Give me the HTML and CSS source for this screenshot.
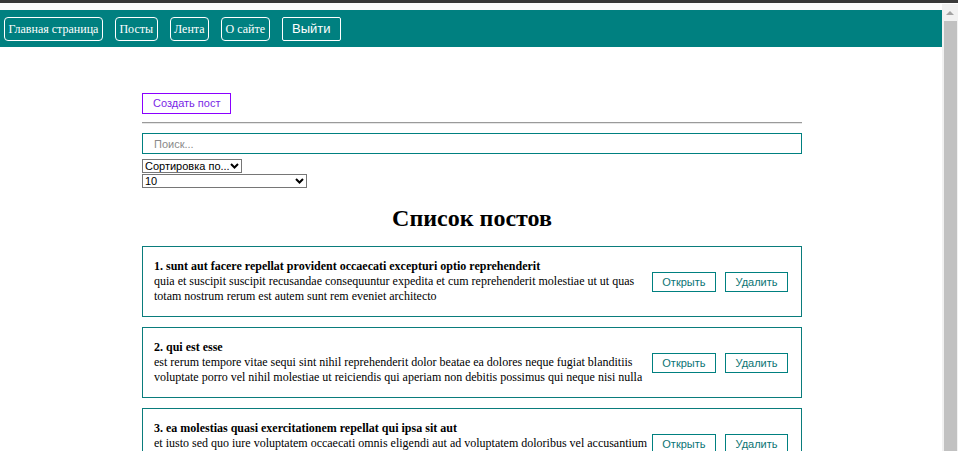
FILE: index.html
```html
<!DOCTYPE html>
<html lang="ru">
<head>
<meta charset="utf-8">
<title>Посты</title>
<link rel="stylesheet" href="styles.css">
</head>
<body>
<div class="chrome"></div>
<div class="window">
  <div class="page">
    <nav class="navbar">
      <a class="nav-link" href="#">Главная страница</a>
      <a class="nav-link" href="#">Посты</a>
      <a class="nav-link" href="#">Лента</a>
      <a class="nav-link" href="#">О сайте</a>
      <button class="logout">Выйти</button>
    </nav>
    <div class="main-wrap">
      <main class="content">
        <button class="create-btn">Создать пост</button>
        <hr class="divider">
        <input class="search" type="text" placeholder="Поиск...">
        <div class="filters">
          <div class="select-wrap sort-wrap">
            <select class="select">
              <option>Сортировка по...</option>
            </select>
            <svg class="chevron" width="9" height="6" viewBox="0 0 9 6"><path d="M1 1 L4.5 4.5 L8 1" fill="none" stroke="#000" stroke-width="2"/></svg>
          </div>
          <div class="select-wrap limit-wrap">
            <select class="select">
              <option>10</option>
            </select>
            <svg class="chevron" width="9" height="6" viewBox="0 0 9 6"><path d="M1 1 L4.5 4.5 L8 1" fill="none" stroke="#000" stroke-width="2"/></svg>
          </div>
        </div>
        <h2 class="list-title">Список постов</h2>
        <div class="post">
          <div class="post-body">
            <div class="post-title">1. sunt aut facere repellat provident occaecati excepturi optio reprehenderit</div>
            <div class="post-text">quia et suscipit suscipit recusandae consequuntur expedita et cum reprehenderit molestiae ut ut quas totam nostrum rerum est autem sunt rem eveniet architecto</div>
          </div>
          <div class="post-actions">
            <button class="post-btn">Открыть</button>
            <button class="post-btn">Удалить</button>
          </div>
        </div>
        <div class="post">
          <div class="post-body">
            <div class="post-title">2. qui est esse</div>
            <div class="post-text">est rerum tempore vitae sequi sint nihil reprehenderit dolor beatae ea dolores neque fugiat blanditiis voluptate porro vel nihil molestiae ut reiciendis qui aperiam non debitis possimus qui neque nisi nulla</div>
          </div>
          <div class="post-actions">
            <button class="post-btn">Открыть</button>
            <button class="post-btn">Удалить</button>
          </div>
        </div>
        <div class="post">
          <div class="post-body">
            <div class="post-title">3. ea molestias quasi exercitationem repellat qui ipsa sit aut</div>
            <div class="post-text">et iusto sed quo iure voluptatem occaecati omnis eligendi aut ad voluptatem doloribus vel accusantium quis pariatur molestiae porro eius odio et labore et velit aut</div>
          </div>
          <div class="post-actions">
            <button class="post-btn">Открыть</button>
            <button class="post-btn">Удалить</button>
          </div>
        </div>
      </main>
    </div>
  </div>
  <div class="scrollbar">
    <div class="scroll-arrow"></div>
    <div class="scroll-thumb"></div>
  </div>
</div>
</body>
</html>
```

FILE: styles.css
```css
html, body {
  margin: 0;
  padding: 0;
  height: 451px;
  overflow: hidden;
  background: #ffffff;
}

.chrome {
  height: 3px;
  background: #3a3a3a;
}

.window {
  display: flex;
  height: 448px;
}

.page {
  flex: 1;
  overflow: hidden;
  padding-top: 7px;
  font-family: "Liberation Serif", "Times New Roman", serif;
}

.navbar {
  height: 37px;
  background: #008080;
  display: flex;
  align-items: center;
  gap: 12px;
  padding-left: 4px;
}

.nav-link {
  color: #ffffff;
  text-decoration: none;
  font-family: "Liberation Serif", serif;
  font-size: 12px;
  line-height: 16px;
  padding: 3px 3.5px;
  border: 1px solid #ffffff;
  border-radius: 4px;
}

.logout {
  background: transparent;
  color: #ffffff;
  font-family: "Liberation Sans", Arial, sans-serif;
  font-size: 13px;
  line-height: 16px;
  height: 24px;
  padding: 0 9.5px;
  border: 1px solid #ffffff;
  border-radius: 2px;
}

.main-wrap {
  padding-left: 2px;
}

.content {
  width: 660px;
  margin: 0 auto;
  padding-top: 46px;
}

.create-btn {
  display: block;
  background: transparent;
  color: #7a1fe6;
  border: 1px solid #8a00ff;
  font-family: "Liberation Sans", Arial, sans-serif;
  font-size: 11px;
  line-height: 15px;
  padding: 2px 10px;
  border-radius: 0;
}

.divider {
  margin: 8px 0 9px;
  border: 0;
  border-top: 1px solid #9a9a9a;
  border-bottom: 1px solid #e6e6e6;
  height: 0;
}

.search {
  display: block;
  box-sizing: border-box;
  width: 660px;
  height: 21px;
  border: 1px solid #008080;
  padding: 0 11px;
  font-family: "Liberation Sans", Arial, sans-serif;
  font-size: 11px;
  outline: none;
}

.search::placeholder {
  color: #8a8a8a;
}

.filters {
  display: flex;
  flex-direction: column;
  align-items: flex-start;
  gap: 1px;
  margin-top: 5px;
}

.select-wrap {
  position: relative;
  height: 14px;
}

.sort-wrap {
  width: 100px;
}

.limit-wrap {
  width: 165px;
}

.select {
  appearance: none;
  -webkit-appearance: none;
  display: block;
  box-sizing: border-box;
  width: 100%;
  height: 14px;
  font-family: "Liberation Sans", Arial, sans-serif;
  font-size: 11px;
  line-height: 12px;
  padding: 0 0 0 2px;
  margin: 0;
  border: 1px solid #767676;
  border-radius: 0;
  background: #ffffff;
  color: #000000;
}

.chevron {
  position: absolute;
  right: 3px;
  top: 4px;
  pointer-events: none;
}

.list-title {
  text-align: center;
  font-size: 24px;
  line-height: 28px;
  font-weight: bold;
  margin: 16px 0 14px;
}

.post {
  display: flex;
  align-items: center;
  gap: 2px;
  border: 1px solid #0a7c7c;
  padding: 12px 13px 12px 11px;
  margin-bottom: 10px;
}

.post-body {
  flex: 1;
  font-size: 12px;
  line-height: 15px;
  color: #000000;
}

.post-title {
  font-weight: bold;
}

.post-actions {
  display: flex;
  gap: 9px;
}

.post-btn {
  background: transparent;
  color: #0b7474;
  border: 1px solid #008080;
  font-family: "Liberation Sans", Arial, sans-serif;
  font-size: 11px;
  line-height: 14px;
  padding: 2px 9.5px;
  border-radius: 0;
}

.scrollbar {
  width: 16px;
  margin-top: 1px;
  background: #f1f1f1;
  display: flex;
  flex-direction: column;
  align-items: center;
}

.scroll-arrow {
  margin-top: 7px;
  width: 0;
  height: 0;
  border-left: 4px solid transparent;
  border-right: 4px solid transparent;
  border-bottom: 4px solid #a3a3a3;
}

.scroll-thumb {
  margin-top: 6px;
  margin-left: 1px;
  width: 13px;
  flex: 1;
  background: #c1c1c1;
}
```
